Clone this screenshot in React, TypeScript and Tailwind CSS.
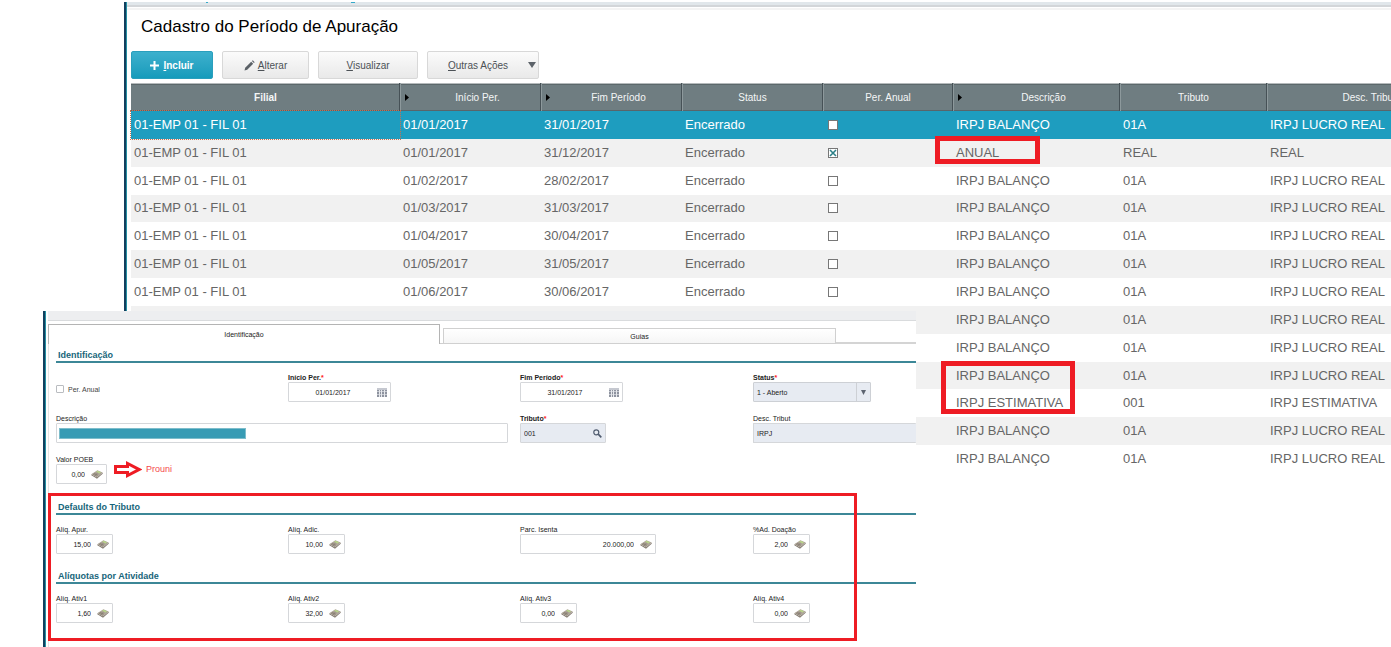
import React from "react";

type Row = {
	inicio: string;
	fim: string;
	anual?: boolean;
	descricao: string;
	tributo: string;
	descTributo: string;
};

const balanco = (inicio: string, fim: string): Row => ({
	inicio,
	fim,
	descricao: "IRPJ BALANÇO",
	tributo: "01A",
	descTributo: "IRPJ LUCRO REAL",
});

const rows: Row[] = [
	balanco("01/01/2017", "31/01/2017"),
	{
		inicio: "01/01/2017",
		fim: "31/12/2017",
		anual: true,
		descricao: "ANUAL",
		tributo: "REAL",
		descTributo: "REAL",
	},
	balanco("01/02/2017", "28/02/2017"),
	balanco("01/03/2017", "31/03/2017"),
	balanco("01/04/2017", "30/04/2017"),
	balanco("01/05/2017", "31/05/2017"),
	balanco("01/06/2017", "30/06/2017"),
	balanco("", ""),
	balanco("", ""),
	balanco("", ""),
	{
		inicio: "",
		fim: "",
		descricao: "IRPJ ESTIMATIVA",
		tributo: "001",
		descTributo: "IRPJ ESTIMATIVA",
	},
	balanco("", ""),
	balanco("", ""),
];

const columns = [
	{ label: "Filial", arrow: false },
	{ label: "Início Per.", arrow: true },
	{ label: "Fim Período", arrow: true },
	{ label: "Status", arrow: false },
	{ label: "Per. Anual", arrow: false },
	{ label: "Descrição", arrow: true },
	{ label: "Tributo", arrow: false },
	{ label: "Desc. Tributo", arrow: false },
];

const PencilIcon = () => (
	<svg width="11" height="11" viewBox="0 0 11 11" fill="#5b6167">
		<path d="M0.5 10.5 L1.2 7.8 L7.2 1.8 L9.2 3.8 L3.2 9.8 Z" />
		<path d="M7.9 1.1 L8.8 0.3 L10.7 2.2 L9.9 3.1 Z" />
	</svg>
);

const CalendarIcon = () => (
	<svg width="10" height="9" viewBox="0 0 10 9" shapeRendering="crispEdges">
		<path fill="#c5c8d0" d="M0 0h10v9H0z" />
		<path
			fill="#8e939f"
			d="M0 2h2v1H0zM3 2h1v1H3zM5 2h2v1H5zM8 2h2v1H8zM0 4h2v2H0zM3 4h1v2H3zM5 4h2v2H5zM8 4h2v2H8zM0 7h2v2H0zM3 7h1v2H3zM5 7h2v2H5zM8 7h2v2H8z"
		/>
		<path fill="#f4f5f8" d="M2 2h1v7H2zM4 2h1v7H4zM7 2h1v7H7z" opacity="0.7" />
	</svg>
);

const CalculatorIcon = () => (
	<svg width="12" height="9" viewBox="0 0 12 9">
		<path fill="#857c72" d="M0.3 5.2 L6 8.7 L11.7 3.8 V2.6 L6 7.2 L0.3 4.2 Z" />
		<path fill="#aca396" d="M0.3 4.3 L6.4 0.3 L11.6 2.6 L6 7.3 Z" />
		<path fill="#b9d68a" d="M5 1.7 L6.6 0.7 L10 2.3 L8.6 3.4 Z" />
		<path
			stroke="#7d746a"
			strokeWidth="0.6"
			d="M1.8 4 L5.9 6.2 M3 3.2 L7 5.3 M3.8 5.2 L6.5 3.2"
		/>
	</svg>
);

const SearchIcon = () => (
	<svg width="9" height="9" viewBox="0 0 9 9" fill="none" stroke="#4f5b6e">
		<circle cx="3.3" cy="3.3" r="2.5" strokeWidth="1.2" />
		<path d="M5.2 5.2 L8.3 8.3" strokeWidth="1.7" />
	</svg>
);

type FieldProps = {
	id: string;
	label: string;
	value: string;
	required?: boolean;
	readOnly?: boolean;
	box: string;
	input?: string;
	icon?: React.ReactNode;
};

const Field = ({
	id,
	label,
	value,
	required,
	readOnly,
	box,
	input = "",
	icon,
}: FieldProps) => (
	<div className="min-w-0">
		<label
			htmlFor={id}
			className={`block h-[10px] whitespace-nowrap ${required ? "font-bold" : ""}`}
		>
			{label}
			{required && <span className="text-[#ff2020]">*</span>}
		</label>
		<div
			className={`flex h-5 items-center rounded-[1px] border border-[#d5d7da] pr-[3px] ${box} ${readOnly ? "bg-[#e7ebf2]" : "bg-white"}`}
		>
			<input
				id={id}
				defaultValue={value}
				readOnly={readOnly}
				className={`h-full w-full min-w-0 bg-transparent outline-none ${input}`}
			/>
			{icon && <span className="shrink-0">{icon}</span>}
		</div>
	</div>
);

const MoneyField = (props: {
	id: string;
	label: string;
	value: string;
	box: string;
}) => (
	<Field
		{...props}
		input="text-right pr-[6px]"
		icon={<CalculatorIcon />}
	/>
);

const SectionTitle = ({ children }: { children: React.ReactNode }) => (
	<h2 className="h-[14px] border-b-2 border-[#3c8797] pl-[2px] text-[9px] leading-[13px] font-bold text-[#17657a]">
		{children}
	</h2>
);

const FieldGrid = ({ children }: { children: React.ReactNode }) => (
	<div className="grid grid-cols-[232px_232px_233px_1fr] gap-y-[11px] pt-[9px]">
		{children}
	</div>
);

const ListWindow = () => (
	<main className="mt-[2px] ml-[124px] border-l-2 border-[#123f5e]">
		<div className="border-l border-[#2591a3]">
			<div className="flex h-[5px] border-b-2 border-[#d3d6d9] bg-[#e1e7eb] pl-[79px]">
				<span className="h-px w-[2px] bg-[#35a9c9]" />
				<span className="ml-[143px] h-px w-[4px] bg-[#35a9c9]" />
			</div>
			<div className="mt-px h-[2px] bg-[#f4f4f4]" />
			<div className="overflow-hidden pl-1">
				<h1 className="flex h-[41px] items-center pb-[7px] pl-[10px] text-[17px] text-black">
					Cadastro do Período de Apuração
				</h1>
				<div className="flex gap-[9px] text-[10px] text-[#4c5156]">
					<button className="flex h-7 w-[82px] items-center justify-center gap-1 rounded-[2px] border border-[#2a9fbd] bg-linear-to-b from-[#3cb0cd] to-[#149bbb] font-bold text-white">
						<svg width="9" height="9" viewBox="0 0 9 9" stroke="white" strokeWidth="2">
							<path d="M4.5 0V9M0 4.5H9" />
						</svg>
						<span>
							<u>I</u>ncluir
						</span>
					</button>
					<button className="flex h-7 w-[87px] items-center justify-center gap-[3px] rounded-[2px] border border-[#d8d8d8] bg-linear-to-b from-[#fbfbfb] to-[#e9e9e9]">
						<PencilIcon />
						<span>
							<u>A</u>lterar
						</span>
					</button>
					<button className="h-7 w-[100px] rounded-[2px] border border-[#d8d8d8] bg-linear-to-b from-[#fbfbfb] to-[#e9e9e9]">
						<u>V</u>isualizar
					</button>
					<button className="flex h-7 w-28 items-center justify-between rounded-[2px] border border-[#d8d8d8] bg-linear-to-b from-[#fbfbfb] to-[#e9e9e9] pr-[2px] pl-5">
						<span>
							<u>O</u>utras Ações
						</span>
						<svg width="8" height="6" viewBox="0 0 8 6" fill="#5d636a">
							<path d="M0 0H8L4 6Z" />
						</svg>
					</button>
				</div>
				<div className="relative mt-1">
					<table className="h-[390px] w-[1346px] table-fixed border-collapse text-left text-[13px] text-[#666]">
						<colgroup>
							<col className="w-[269px]" />
							<col className="w-[141px]" />
							<col className="w-[141px]" />
							<col className="w-[141px]" />
							<col className="w-[130px]" />
							<col className="w-[167px]" />
							<col className="w-[147px]" />
							<col className="w-[210px]" />
						</colgroup>
						<thead>
							<tr className="h-7 bg-[#6f7d81] text-[10px] text-[#f4f6f6] shadow-[inset_0_1px_#b5babc,inset_0_2px_#5c686b,inset_0_-1px_#59656a]">
								{columns.map((col, i) => (
									<th
										key={col.label}
										className={`p-0 ${i === 0 ? "font-bold" : "font-normal"} ${i > 0 ? "shadow-[inset_1px_0_#8d999c,-1px_0_#465156]" : ""}`}
									>
										<div className="flex items-center">
											{col.arrow && (
												<span className="w-[14px] pl-[5px]">
													<svg width="4" height="7" viewBox="0 0 4 7">
														<path d="M0 0L4 3.5L0 7Z" />
													</svg>
												</span>
											)}
											<span className="flex-1 text-center">{col.label}</span>
										</div>
									</th>
								))}
							</tr>
						</thead>
						<tbody className="leading-[16px]">
							{rows.map((row, i) => (
								<tr
									key={i}
									className={
										i === 0
											? "bg-[#1e9dbf] text-white"
											: i % 2
												? "bg-[#f1f1f1]"
												: "bg-white"
									}
								>
									<td
										className={`px-[3px] py-0 ${i === 0 ? "outline-1 outline-[#c9704f] outline-dotted" : ""}`}
									>
										{row.inicio && "01-EMP 01 - FIL 01"}
									</td>
									<td className="px-[3px] py-0">{row.inicio}</td>
									<td className="px-[3px] py-0">{row.fim}</td>
									<td className="px-[3px] py-0">{row.inicio && "Encerrado"}</td>
									<td className="py-0 pl-[5px]">
										{row.inicio && (
											<span className="grid size-[10px]">
												<input
													type="checkbox"
													aria-label="Per. Anual"
													defaultChecked={row.anual}
													className="peer col-start-1 row-start-1 size-[10px] appearance-none border border-[#777] bg-white"
												/>
												<svg
													className="pointer-events-none invisible col-start-1 row-start-1 peer-checked:visible"
													width="10"
													height="10"
													viewBox="0 0 10 10"
													stroke="#2c8088"
													strokeWidth="1.6"
												>
													<path d="M2 2L8 8M8 2L2 8" />
												</svg>
											</span>
										)}
									</td>
									<td className="px-[3px] py-0">{row.descricao}</td>
									<td className="px-[3px] py-0">{row.tributo}</td>
									<td className="px-[3px] py-0">{row.descTributo}</td>
								</tr>
							))}
						</tbody>
					</table>
					{/* highlights over the description column */}
					<div className="absolute top-[53px] left-[804px] h-7 w-[105px] border-5 border-[#ee1c24]" />
					<div className="absolute top-[278px] left-[810px] h-[53px] w-[134px] border-5 border-[#ee1c24]" />
				</div>
			</div>
		</div>
	</main>
);

const FormWindow = () => (
	<section className="absolute top-[311px] bottom-0 left-[43px] w-[873px] border-l-2 border-[#123f5e] bg-white text-[7px] leading-[11px] text-[#222]">
		<div className="flex h-full flex-col border-l border-[#2591a3] pl-[2px]">
			<div className="h-[10px] shrink-0 border-b border-[#d9dbdd] bg-[#edeef0]" />
			<div className="flex h-[23px] shrink-0 items-end pt-[3px]">
				<button className="h-5 w-[392px] border border-b-0 border-[#b4b4b4] bg-white">
					Identificação
				</button>
				<span className="w-[3px] self-stretch border-b border-[#cfcfcf]" />
				<button className="h-4 w-[393px] border border-[#d0d0d0] bg-linear-to-b from-white to-[#f6f6f6]">
					Guias
				</button>
				<span className="flex-1 self-stretch border-b-2 border-[#d4d4d4]" />
			</div>
			<div className="flex flex-1 flex-col gap-[17px] border-l border-[#e3e3e3] pt-[5px] pl-[7px]">
				<div>
					<SectionTitle>Identificação</SectionTitle>
					<FieldGrid>
						<label className="flex items-center gap-1 pt-1 text-[#444]">
							<input
								type="checkbox"
								className="size-2 appearance-none rounded-[1px] border border-[#b9bcc0] bg-white"
							/>
							Per. Anual
						</label>
						<Field
							id="inicio"
							label="Início Per."
							value="01/01/2017"
							required
							box="w-[103px]"
							input="text-center"
							icon={<CalendarIcon />}
						/>
						<Field
							id="fim"
							label="Fim Período"
							value="31/01/2017"
							required
							box="w-[103px]"
							input="text-center"
							icon={<CalendarIcon />}
						/>
						<div>
							<label htmlFor="status" className="block h-[10px] font-bold">
								Status<span className="text-[#ff2020]">*</span>
							</label>
							<div className="grid h-5 w-[118px] grid-cols-[1fr_14px] items-center rounded-[1px] border border-[#cdd0d5] bg-[#e7ebf2]">
								<select
									id="status"
									className="col-span-2 col-start-1 row-start-1 h-full appearance-none bg-transparent pl-[3px] outline-none"
								>
									<option>1 - Aberto</option>
								</select>
								<span className="pointer-events-none col-start-2 row-start-1 flex h-full items-center justify-center border-l border-[#cdd0d5]">
									<svg width="5" height="5" viewBox="0 0 5 5" fill="#5d6470">
										<path d="M0 0H5L2.5 5Z" />
									</svg>
								</span>
							</div>
						</div>

						<div className="col-span-2">
							<label htmlFor="descricao" className="block h-[10px]">
								Descrição
							</label>
							<div className="flex h-5 w-[452px] items-center rounded-[1px] border border-[#d5d7da] px-[2px]">
								<input
									id="descricao"
									className="h-[11px] w-[187px] border border-[#7dbdcb] bg-[#379bb4] outline-none"
								/>
							</div>
						</div>
						<Field
							id="tributo"
							label="Tributo"
							value="001"
							required
							readOnly
							box="w-[86px]"
							input="pl-[3px]"
							icon={<SearchIcon />}
						/>
						<Field
							id="desc-tributo"
							label="Desc. Tribut"
							value="IRPJ"
							readOnly
							box="w-full border-r-0"
							input="pl-[3px]"
						/>

						<div className="flex items-center">
							<MoneyField id="poeb" label="Valor POEB" value="0,00" box="w-[51px]" />
							<svg
								className="ml-[7px]"
								width="28"
								height="17"
								viewBox="0 0 28 17"
								fill="white"
								stroke="#ee1c24"
								strokeWidth="3"
							>
								<path d="M1.5 5.5H13.5V2.5L25 8.5L13.5 14.5V11.5H1.5Z" />
							</svg>
							<span className="ml-1 text-[9px] text-[#f4494c]">Prouni</span>
						</div>
					</FieldGrid>
				</div>

				<div className="relative flex flex-col gap-4">
					<div>
						<SectionTitle>Defaults do Tributo</SectionTitle>
						<FieldGrid>
							<MoneyField id="apur" label="Alíq. Apur." value="15,00" box="w-[57px]" />
							<MoneyField id="adic" label="Alíq. Adic." value="10,00" box="w-[57px]" />
							<MoneyField id="isenta" label="Parc. Isenta" value="20.000,00" box="w-[136px]" />
							<MoneyField id="doacao" label="%Ad. Doação" value="2,00" box="w-[57px]" />
						</FieldGrid>
					</div>
					<div>
						<SectionTitle>Alíquotas por Atividade</SectionTitle>
						<FieldGrid>
							<MoneyField id="ativ1" label="Alíq. Ativ1" value="1,60" box="w-[57px]" />
							<MoneyField id="ativ2" label="Alíq. Ativ2" value="32,00" box="w-[57px]" />
							<MoneyField id="ativ3" label="Alíq. Ativ3" value="0,00" box="w-[57px]" />
							<MoneyField id="ativ4" label="Alíq. Ativ4" value="0,00" box="w-[57px]" />
						</FieldGrid>
					</div>
					<div className="pointer-events-none absolute -top-2 -bottom-[18px] -left-2 w-[809px] border-3 border-[#ee1c24]" />
				</div>
			</div>
		</div>
	</section>
);

const App = () => {
	return (
		<div className="relative flow-root min-h-screen overflow-hidden bg-white font-['Liberation_Sans',Arial,sans-serif]">
			<ListWindow />
			<FormWindow />
		</div>
	);
};

export default App;
